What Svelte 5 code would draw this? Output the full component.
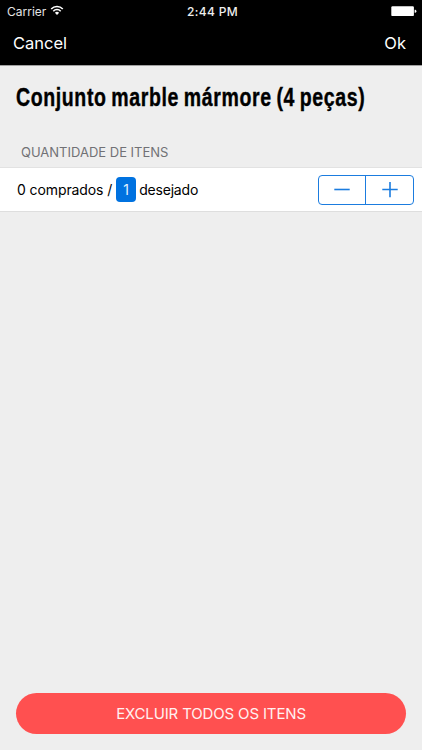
<script>
  let bought = 0
  let wanted = $state(1)

  function decrease() {
    if (wanted > 1) wanted -= 1
  }
</script>

<div class="screen">
  <header>
    <div class="status">
      <div class="carrier">
        <span>Carrier</span>
        <svg class="wifi" viewBox="0 0 14 11" width="14" height="11">
          <path d="M1.2 4 A8 8 0 0 1 12.8 4" />
          <path d="M3.3 6.2 A5 5 0 0 1 10.7 6.2" />
          <path class="dot" d="M7 10 L4.9 7.8 A2.9 2.9 0 0 1 9.1 7.8 Z" />
        </svg>
      </div>
      <div class="time">2:44 PM</div>
      <svg class="battery" viewBox="0 0 26 11" width="26" height="11">
        <rect x="0.3" y="0.3" width="22.6" height="9.8" rx="1.2" />
        <path d="M23.6 3.7 h0.8 q1 0.3 1 1.5 t-1 1.5 h-0.8 z" />
      </svg>
    </div>
    <nav>
      <button class="cancel">Cancel</button>
      <button class="ok">Ok</button>
    </nav>
  </header>

  <main>
    <h1><span>Conjunto marble mármore (4 peças)</span></h1>
    <h2>QUANTIDADE DE ITENS</h2>
    <div class="row">
      <div class="summary">
        <span class="bought">{bought} comprados /</span>
        <span class="badge">{wanted}</span>
        <span class="wanted">desejado</span>
      </div>
      <div class="stepper">
        <button aria-label="Diminuir" onclick={decrease}>
          <svg viewBox="0 0 16 16" width="16" height="16"><path d="M0.3 7.5 H15.7" /></svg>
        </button>
        <button aria-label="Aumentar" onclick={() => (wanted += 1)}>
          <svg viewBox="0 0 16 16" width="16" height="16"><path d="M0.3 7.5 H15.7 M8 0 V15.2" /></svg>
        </button>
      </div>
    </div>
  </main>

  <footer>
    <button class="delete"><span>EXCLUIR TODOS OS ITENS</span></button>
  </footer>
</div>

<style>
:global(body) {
  margin: 0;
  background: #eee;
}

.screen {
  height: 750px;
  display: flex;
  flex-direction: column;
  background: #eee;
  color: #000;
  font-family: Inter, Roboto, sans-serif;
  overflow: hidden;
}

button {
  margin: 0;
  padding: 0;
  border: 0;
  background: none;
  color: inherit;
  font: inherit;
}

header {
  height: 66px;
  flex: none;
  background: #000;
  color: #fff;
  border-bottom: 1px solid #a0a0a0;
  box-sizing: border-box;
}

.status {
  height: 22px;
  display: grid;
  grid-template-columns: 1fr auto 1fr;
  align-items: center;
  padding: 0 5px 0 7px;
  font-size: 12px;
}

.carrier {
  display: flex;
  align-items: center;
  gap: 4px;
  color: #e4e4e4;
}

.wifi {
  margin-top: -2px;
}

.wifi path {
  fill: none;
  stroke: #fff;
  stroke-width: 1.6;
}

.wifi .dot {
  fill: #fff;
  stroke: none;
}

.time {
  padding-left: 1px;
  font-weight: 500;
  letter-spacing: 0.35px;
  color: #eee;
}

.battery {
  justify-self: end;
  fill: #fff;
}

nav {
  height: 42px;
  display: flex;
  justify-content: space-between;
  align-items: center;
  padding: 0 16px 0 13px;
  font-size: 16.5px;
  letter-spacing: -0.1px;
}

main {
  flex: 1;
}

h1 {
  margin: 0;
  height: 62px;
  padding-left: 16px;
  display: flex;
  align-items: center;
  font: bold 25px "Liberation Sans", Arial, sans-serif;
  white-space: nowrap;
}

/* condensed heading */
h1 span {
  transform: scaleX(0.78);
  transform-origin: left;
  letter-spacing: 0.8px;
  word-spacing: -1.6px;
  -webkit-text-stroke: 0.4px #000;
}

h2 {
  margin: 0;
  height: 39px;
  line-height: 49px;
  padding-left: 21px;
  font-size: 13px;
  font-weight: 400;
  color: #717175;
}

.row {
  height: 45px;
  box-sizing: border-box;
  display: flex;
  justify-content: space-between;
  align-items: center;
  padding: 0 8px 0 17px;
  background: #fff;
  border-top: 1px solid #e2e2e2;
  border-bottom: 1px solid #dedede;
}

.summary {
  display: flex;
  align-items: center;
  font-size: 14px;
  letter-spacing: -0.1px;
}

.wanted {
  letter-spacing: -0.2px;
}

.badge {
  width: 20px;
  height: 25px;
  line-height: 25px;
  margin: 0 3px 0 4px;
  border-radius: 4px;
  text-align: center;
  background: #0072e0;
  color: #e4f1ff;
}

.stepper {
  width: 96px;
  height: 30px;
  box-sizing: border-box;
  display: grid;
  grid-template-columns: 46px 1fr;
  border: 1px solid #1b7cdf;
  border-radius: 4px;
}

.stepper button {
  display: flex;
  align-items: center;
  justify-content: center;
}

.stepper button + button {
  border-left: 1px solid #1b7cdf;
}

.stepper path {
  stroke: #1b7cdf;
  stroke-width: 1.6;
  fill: none;
}

footer {
  padding: 0 16px 16px;
}

.delete {
  display: block;
  width: 100%;
  height: 41px;
  border-radius: 21px;
  background: #ff5050;
  color: #fff0f0;
  font-size: 15px;
  letter-spacing: -0.15px;
}
</style>
